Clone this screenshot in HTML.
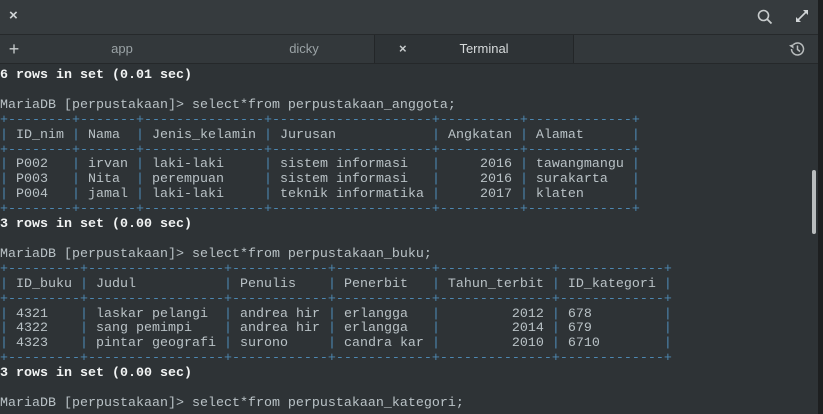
<!DOCTYPE html>
<html><head><meta charset="utf-8"><style>
html,body{margin:0;padding:0;width:823px;height:414px;overflow:hidden;background:#2e3336;}
.title{position:absolute;left:0;top:0;width:818px;height:34px;background:#363b3e;border-bottom:1px solid #26292b;}
.tabs{position:absolute;left:0;top:35px;width:818px;height:28px;background:#33383b;border-bottom:1px solid #25282a;}
.tab{position:absolute;top:0;height:28px;line-height:28px;font-family:"Liberation Sans",sans-serif;font-size:13px;color:#9aa2a5;text-align:center;}
.act{left:374px;width:198px;background:#2e3336;border-left:1px solid #232628;border-right:1px solid #232628;color:#d6dadb;}
.edge{position:absolute;left:818px;top:0;width:5px;height:414px;background:#1d1f20;}
pre{position:absolute;left:0;top:69px;margin:0;font-family:"Liberation Mono",monospace;font-size:13.33px;line-height:14.9px;color:#b9c2c6;}
b{color:#f2f4f4;}
i{font-style:normal;color:#4d88b2;}
.sb{position:absolute;left:812px;top:170px;width:4px;height:64px;background:#b8bcbd;border-radius:2px;}
</style></head><body>
<div class="title">
<div style="position:absolute;left:9px;top:7px;color:#d0d4d6;font:bold 15px 'Liberation Sans',sans-serif;">×</div>
<svg style="position:absolute;left:757px;top:9px" width="16" height="16" viewBox="0 0 16 16"><circle cx="6.5" cy="6.5" r="5" fill="none" stroke="#c8cccd" stroke-width="1.6"/><line x1="10" y1="10" x2="14.5" y2="14.5" stroke="#c8cccd" stroke-width="1.8"/></svg>
<svg style="position:absolute;left:795px;top:9px" width="14" height="14" viewBox="0 0 14 14"><path d="M8 1h5v5zM1 8v5h5z" fill="#d0d4d6"/><line x1="12" y1="2" x2="2" y2="12" stroke="#d0d4d6" stroke-width="1.6"/></svg>
</div>
<div class="tabs">
<div class="tab" style="left:6px;width:16px;font-size:18px;color:#c8cccd">+</div>
<div class="tab" style="left:22px;width:200px;">app</div>
<div class="tab" style="left:204px;width:200px;">dicky</div>
<div class="tab act"><span style="position:absolute;left:24px;color:#c8cccd;font-weight:bold">×</span><span style="padding-left:20px">Terminal</span></div>
<svg style="position:absolute;left:788px;top:5px" width="18" height="18" viewBox="0 0 18 18"><path d="M3.5 9a6 6 0 1 0 1.8-4.3" fill="none" stroke="#b8bcbd" stroke-width="1.5"/><path d="M1 5.5l4.3-1.2 0.3 4.3z" fill="#b8bcbd"/><path d="M9.5 5.5v4l2.5 2" fill="none" stroke="#b8bcbd" stroke-width="1.5"/></svg>
</div>
<pre><b>6 rows in set (0.01 sec)</b>

MariaDB [perpustakaan]&gt; select*from perpustakaan_anggota;
<i>+--------+-------+---------------+--------------------+----------+-------------+</i>
<i>|</i> ID_nim <i>|</i> Nama  <i>|</i> Jenis_kelamin <i>|</i> Jurusan            <i>|</i> Angkatan <i>|</i> Alamat      <i>|</i>
<i>+--------+-------+---------------+--------------------+----------+-------------+</i>
<i>|</i> P002   <i>|</i> irvan <i>|</i> laki-laki     <i>|</i> sistem informasi   <i>|</i>     2016 <i>|</i> tawangmangu <i>|</i>
<i>|</i> P003   <i>|</i> Nita  <i>|</i> perempuan     <i>|</i> sistem informasi   <i>|</i>     2016 <i>|</i> surakarta   <i>|</i>
<i>|</i> P004   <i>|</i> jamal <i>|</i> laki-laki     <i>|</i> teknik informatika <i>|</i>     2017 <i>|</i> klaten      <i>|</i>
<i>+--------+-------+---------------+--------------------+----------+-------------+</i>
<b>3 rows in set (0.00 sec)</b>

MariaDB [perpustakaan]&gt; select*from perpustakaan_buku;
<i>+---------+-----------------+------------+------------+--------------+-------------+</i>
<i>|</i> ID_buku <i>|</i> Judul           <i>|</i> Penulis    <i>|</i> Penerbit   <i>|</i> Tahun_terbit <i>|</i> ID_kategori <i>|</i>
<i>+---------+-----------------+------------+------------+--------------+-------------+</i>
<i>|</i> 4321    <i>|</i> laskar pelangi  <i>|</i> andrea hir <i>|</i> erlangga   <i>|</i>         2012 <i>|</i> 678         <i>|</i>
<i>|</i> 4322    <i>|</i> sang pemimpi    <i>|</i> andrea hir <i>|</i> erlangga   <i>|</i>         2014 <i>|</i> 679         <i>|</i>
<i>|</i> 4323    <i>|</i> pintar geografi <i>|</i> surono     <i>|</i> candra kar <i>|</i>         2010 <i>|</i> 6710        <i>|</i>
<i>+---------+-----------------+------------+------------+--------------+-------------+</i>
<b>3 rows in set (0.00 sec)</b>

MariaDB [perpustakaan]&gt; select*from perpustakaan_kategori;
</pre>
<div class="sb"></div>
<div class="edge"></div>
</body></html>
